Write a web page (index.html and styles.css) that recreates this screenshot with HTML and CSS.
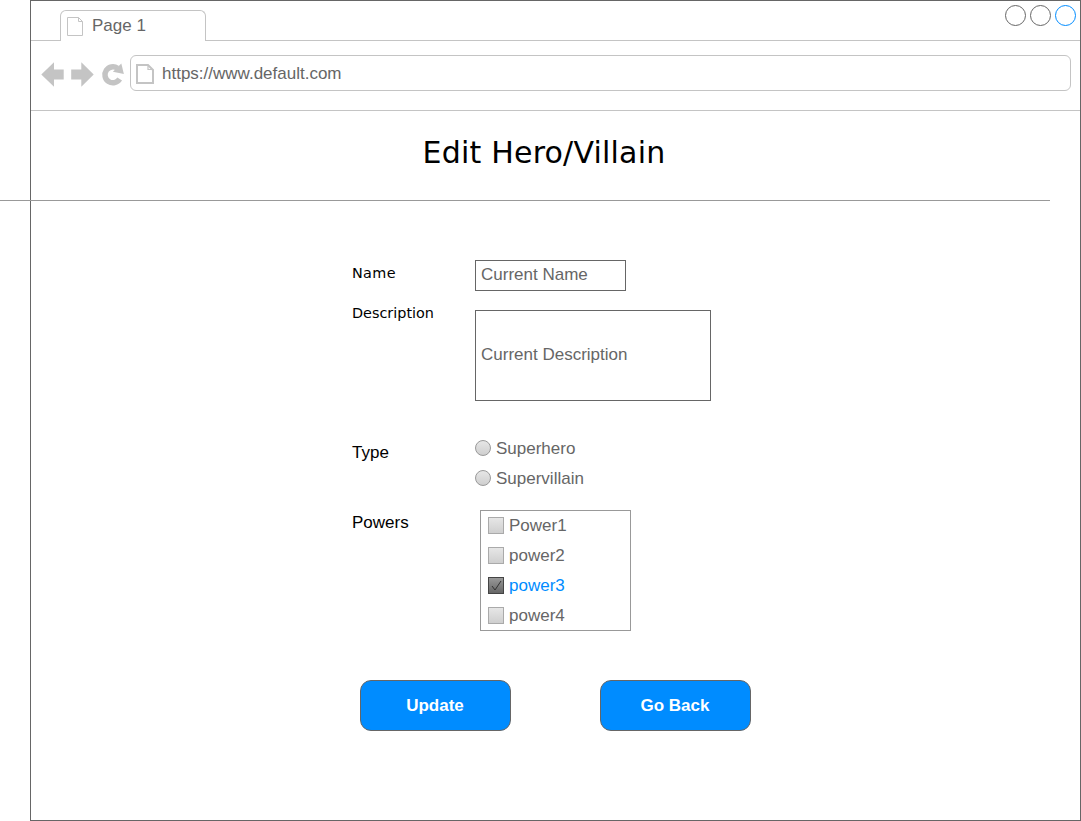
FILE: index.html
```html
<!DOCTYPE html>
<html lang="en">
<head>
<meta charset="utf-8">
<title>Edit Hero/Villain</title>
<link rel="stylesheet" href="styles.css">
</head>
<body>
<div class="window">
  <header class="tabbar">
    <div class="tab">
      <svg class="tab-icon" width="17" height="20" viewBox="0 0 17 20"><path d="M.5 .5H11.5L15.500 4.500V18.500H.5ZM11.500 .5V4.500H15.500"/></svg>
      <span>Page 1</span>
    </div>
    <div class="controls"><i class="dot"></i><i class="dot"></i><i class="dot dot-active"></i></div>
  </header>
  <nav class="toolbar">
    <svg class="nav-icons" width="84" height="26" viewBox="41 62 84 26">
      <path class="solid" d="M41.300 74.500L54 62.300V69.500H63.700V79.500H54V86.700ZM93.700 74.500L81.300 62.300V69.500H71.200V79.500H81.300V86.700Z"/>
      <path class="arc" d="M119.700 79.100A8 8 0 1 1 117.500 68.200"/>
      <path class="solid" d="M121.300 63.500L123.900 74L112.900 71.700Z"/>
    </svg>
    <div class="address">
      <svg class="page-icon" width="18" height="20" viewBox="0 0 18 20"><path d="M1 1H12L17 6V19H1Z"/><path class="fold" d="M12 1V5.500H17"/></svg>
      <span>https://www.default.com</span>
    </div>
  </nav>
  <h1 class="title">Edit Hero/Villain</h1>
  <hr class="rule">
  <main class="form">
    <div class="row row-name"><label class="label verdana name-label">Name</label><div class="input">Current Name</div></div>
    <div class="row row-desc"><label class="label verdana">Description</label><div class="input input-area">Current Description</div></div>
    <div class="row row-type"><span class="label">Type</span>
      <div class="radios">
        <div class="choice"><i class="radio"></i><span>Superhero</span></div>
        <div class="choice"><i class="radio"></i><span>Supervillain</span></div>
      </div>
    </div>
    <div class="row row-powers"><span class="label">Powers</span>
      <div class="list">
        <div class="choice"><i class="check"></i>Power1</div>
        <div class="choice"><i class="check"></i>power2</div>
        <div class="choice selected"><i class="check checked"><svg width="14" height="14" viewBox="0 0 14 14"><path d="M3 8L6 12L12 3"/></svg></i>power3</div>
        <div class="choice"><i class="check"></i>power4</div>
      </div>
    </div>
    <div class="actions"><button class="button">Update</button><button class="button">Go Back</button></div>
  </main>
</div>
</body>
</html>
```
FILE: styles.css
```css
* { box-sizing: border-box; }
body {
  margin: 0;
  padding-left: 30px;
  background: #fff;
  color: #666;
  font: 17px/20px "Liberation Sans", Arial, sans-serif;
  overflow: hidden;
}
.window { width: 1051px; height: 821px; border: 1px solid #666; }
svg { display: block; flex: none; fill: none; stroke: #c4c4c4; }

.tabbar {
  display: flex;
  justify-content: space-between;
  height: 40px;
  padding: 9px 0 0 29px;
  border-bottom: 1px solid #c4c4c4;
}
.tab {
  display: flex;
  width: 146px;
  height: 31px;
  padding: 5px 0 0 6px;
  gap: 8px;
  background: #fff;
  border: 1px solid #c4c4c4;
  border-bottom: 0;
  border-radius: 6px 6px 0 0;
}
.tab-icon { margin-top: 1px; }
.controls { display: flex; gap: 4px; margin: -5px 4px 0 0; }
.dot { width: 21px; height: 21px; border: 1px solid #666; border-radius: 50%; }
.dot-active { border-color: #008cff; }

.toolbar {
  display: flex;
  height: 70px;
  padding: 14px 9px 0 10px;
  gap: 5px;
  border-bottom: 1px solid #c4c4c4;
}
.nav-icons { margin-top: 7px; }
.nav-icons .solid { fill: #c4c4c4; stroke: none; }
.nav-icons .arc { stroke-width: 5.5; }
.address {
  display: flex;
  flex: 1;
  align-items: center;
  height: 36px;
  padding: 2px 5px 0;
  gap: 8px;
  border: 1px solid #c4c4c4;
  border-radius: 6px;
}
.page-icon { stroke-width: 2; }
.page-icon .fold { stroke-width: 1.2; }

.title {
  height: 89px;
  margin: 0;
  padding: 22px 23px 0 0;
  color: #000;
  font: 30px/40px "DejaVu Sans", Verdana, sans-serif;
  letter-spacing: .2px;
  text-align: center;
}
.rule { width: 1050px; height: 1px; margin: 0 0 0 -31px; border: 0; background: #999; }

.form { padding: 59px 0 0 321px; }
.row { display: flex; }
.label { width: 123px; color: #000; }
.verdana { font: 14.4px/20px "DejaVu Sans", Verdana, sans-serif; }
.name-label { letter-spacing: .35px; }
.input {
  display: flex;
  align-items: center;
  width: 151px;
  height: 31px;
  padding: 0 5px 2px;
  border: 1px solid #666;
}
.input-area { width: 236px; height: 91px; }
.row-name { height: 50px; }
.row-name .label { padding-top: 3px; }
.row-desc { height: 128px; }
.row-desc .label { margin-top: -7px; }
.row-type { height: 72px; }
.row-type .label { padding-top: 5px; }
.row-powers { height: 170px; }
.row-powers .label { padding-top: 3px; }
.choice { display: flex; align-items: center; height: 30px; gap: 5px; }
.radios .choice { height: 20px; margin-bottom: 10px; }
.radios span { padding-top: 2px; }
.radio {
  width: 16px;
  height: 16px;
  border: 1px solid #999;
  border-radius: 50%;
  background: linear-gradient(#e6e6e6, #cfcfcf);
}
.list { width: 151px; height: 121px; margin-left: 5px; padding-left: 7px; border: 1px solid #999; }
.list .choice { height: 30px; }
.check { width: 16px; height: 17px; margin-bottom: 1px; border: 1px solid #aaa; background: linear-gradient(#e6e6e6, #cfcfcf); }
.checked { border-color: #444; background: linear-gradient(#999, #666); }
.checked svg { stroke: #333; }
.selected { color: #008cff; }
.actions { display: flex; gap: 89px; padding-left: 8px; }
.button {
  width: 151px;
  height: 51px;
  padding: 0 1px 0 0;
  border: 1px solid #666;
  border-radius: 11px;
  background: #008cff;
  color: #fff;
  font: bold 17px/20px "Liberation Sans", Arial, sans-serif;
}
```
